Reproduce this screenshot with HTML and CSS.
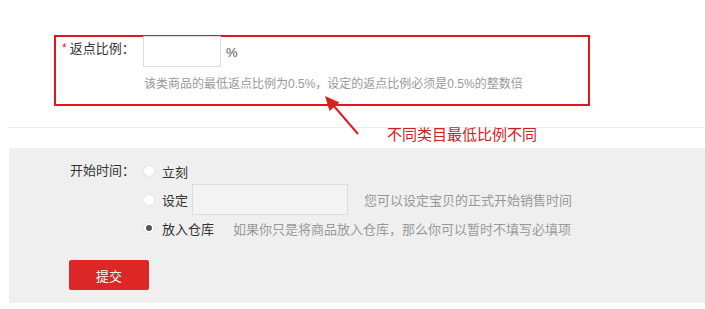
FILE: index.html
```html
<!DOCTYPE html>
<html lang="zh-CN">
<head>
<meta charset="utf-8">
<title>返点比例</title>
<link rel="stylesheet" href="styles.css">
</head>
<body>
<div class="page">
  <section class="top">
    <div class="box">
      <div class="field-row">
        <div class="label"><span class="star">*</span>返点比例：</div>
        <div class="text-input"></div>
        <span class="unit">%</span>
      </div>
      <div class="hint">该类商品的最低返点比例为0.5%，设定的返点比例必须是0.5%的整数倍</div>
    </div>
  </section>
  <div class="divider"></div>
  <div class="annot">不同类目最低比例不同</div>
  <section class="gray">
    <div class="time-row">
      <div class="label2">开始时间：</div>
      <div class="options">
        <div class="opt"><span class="radio"></span><span class="opt-text">立刻</span></div>
        <div class="opt opt-set"><span class="radio"></span><span class="opt-text">设定</span><div class="date-input"></div><span class="hint2 hint-set">您可以设定宝贝的正式开始销售时间</span></div>
        <div class="opt"><span class="radio checked"></span><span class="opt-text">放入仓库</span><span class="hint2 hint-store">如果你只是将商品放入仓库，那么你可以暂时不填写必填项</span></div>
      </div>
    </div>
    <button class="submit">提交</button>
  </section>
  <svg class="arrow" width="705" height="309" viewBox="0 0 705 309">
    <line x1="358" y1="134" x2="333" y2="105" stroke="#d8201c" stroke-width="2"/>
    <polygon points="325,96 339.5,102.5 329.5,111" fill="#d8201c"/>
  </svg>
</div>
</body>
</html>
```

FILE: styles.css
```css
* { box-sizing: border-box; }
html, body { margin: 0; padding: 0; background: #fff; }
body {
  font-family: "Liberation Sans", "Noto Sans CJK SC", sans-serif;
  font-size: 13px;
  color: #333;
}
.page { position: relative; width: 705px; height: 309px; overflow: hidden; }
.top { padding: 35px 0 0 54px; }
.box {
  width: 536px;
  height: 71px;
  border: 2px solid #e2161c;
  padding: 0 0 0 6px;
}
.field-row { display: flex; align-items: flex-start; }
.label { width: 81px; padding-top: 2px; line-height: 20px; font-size: 13px; color: #333; }
.star { color: #d8201c; font-size: 12px; margin-right: 3px; position: relative; top: -1px; }
.text-input { width: 78px; height: 31px; border: 1px solid #ddd; background: #fff; margin-top: -1px; }
.unit { margin-left: 5px; align-self: center; font-size: 13px; color: #555; padding-top: 1px; }
.hint { margin: 8px 0 0 82px; font-size: 12px; line-height: 18px; color: #999; }
.divider { margin: 21px 0 0 9px; border-top: 1px solid #ebebeb; }
.annot { height: 20px; padding-left: 387px; font-size: 15px; line-height: 14px; padding-top: 0; color: #d01c1f; }
.gray {
  margin-left: 9px;
  height: 155px;
  background: #efefef;
  padding: 13px 0 0 61px;
}
.time-row { display: flex; align-items: flex-start; }
.label2 { width: 73px; line-height: 20px; color: #333; }
.options { display: flex; flex-direction: column; gap: 3px; }
.opt { display: flex; align-items: center; height: 20px; }
.opt-set { height: 31px; }
.radio {
  width: 12px; height: 12px; border-radius: 50%;
  background: #fff; border: 1px solid #e4e4e4;
  display: flex; align-items: center; justify-content: center;
  margin-right: 7px;
}
.radio.checked::after { content: ""; width: 6px; height: 6px; border-radius: 50%; background: #555; }
.opt-text { color: #333; }
.date-input { width: 156px; height: 31px; border: 1px solid #dcdcdc; background: #f3f3f3; margin-left: 4px; }
.hint2 { color: #999; }
.hint-set { margin-left: 16px; }
.hint-store { margin-left: 19px; }
.submit {
  display: block;
  margin: 22px 0 0 -1px;
  width: 80px; height: 30px;
  border: none; border-radius: 2px;
  background: #dd2726; color: #fff;
  font-family: "Liberation Sans", "Noto Sans CJK SC", sans-serif;
  font-size: 13px;
  padding: 0;
}
.arrow { position: absolute; left: 0; top: 0; pointer-events: none; }
```
